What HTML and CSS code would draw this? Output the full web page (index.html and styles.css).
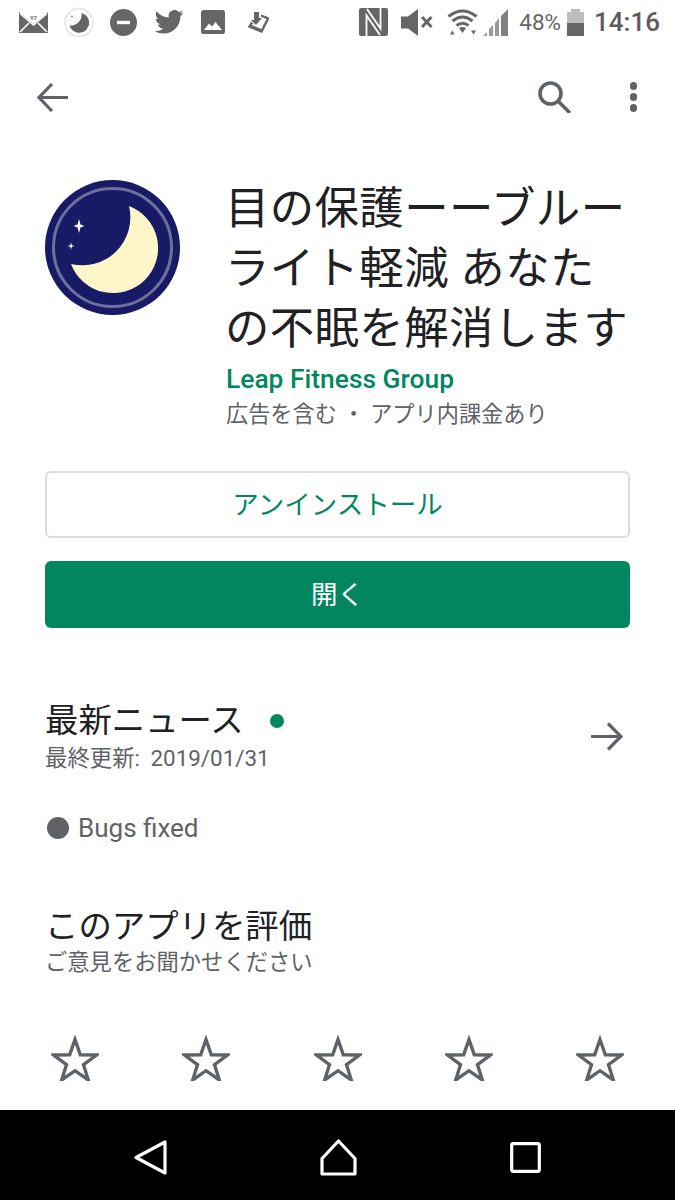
FILE: index.html
```html
<!DOCTYPE html>
<html lang="ja">
    <head>
        <meta charset="utf-8" />
        <meta name="viewport" content="width=device-width, initial-scale=1" />
        <title>目の保護</title>
        <link rel="stylesheet" href="styles.css">
    </head>
    <body>
        <div class="screen">
            <!-- Status bar -->
            <div class="status">
                <div class="status-left">
                    <svg class="ic-mail" width="29" height="21" viewBox="0 0 29 21"><rect width="29" height="21" fill="#666"/><path d="M0 0h29L14.500 12z" fill="#fff"/><path d="M1 1.500L14.500 13 28 1.500M1 20l9-9M28 20l-9-9" fill="none" stroke="#fff" stroke-width="1.600"/><text x="14.500" y="7.500" class="mail-text">Y7</text></svg>
                    <svg class="ic-moon" width="30" height="31" viewBox="0 0 30 31"><circle cx="15" cy="15.500" r="14" fill="#fff" stroke="#e4e4e4" stroke-width="1.500"/><path d="M17.500 6a10 10 0 1 1-12 12.500a11 11 0 0 0 12-12.500z" fill="#666"/><circle cx="8" cy="9.500" r="1" fill="#888"/><circle cx="6" cy="13" r=".6" fill="#aaa"/></svg>
                    <svg class="ic-dnd" width="27" height="27" viewBox="0 0 27 27"><circle cx="13.500" cy="13.500" r="13.500" fill="#666"/><rect x="7" y="11.800" width="13" height="3.400" fill="#fff"/></svg>
                    <svg class="ic-bird" width="30" height="24" viewBox="0 0 24 20"><path d="M24 2.400a9.800 9.800 0 0 1-2.800.8 4.900 4.900 0 0 0 2.200-2.700 9.800 9.800 0 0 1-3.100 1.200 4.900 4.900 0 0 0-8.400 4.500A14 14 0 0 1 1.700 1a4.900 4.900 0 0 0 1.500 6.600 4.900 4.900 0 0 1-2.200-.6c0 2.400 1.700 4.400 3.900 4.900a4.900 4.900 0 0 1-2.200.1 4.900 4.900 0 0 0 4.600 3.400A9.900 9.900 0 0 1 0 17.400 14 14 0 0 0 7.500 19.600c9.100 0 14-7.500 14-14v-.6A10 10 0 0 0 24 2.400z" fill="#666"/></svg>
                    <svg class="ic-pic" width="24" height="24" viewBox="0 0 24 24"><rect width="24" height="24" rx="2.500" fill="#666"/><path d="M3 20l5-6.500 3 3 3.500-4.500 6.500 8z" fill="#fff"/></svg>
                    <svg class="ic-ticket" width="21" height="21" viewBox="0 0 21 21"><path d="M6 0h5v6h3l-6 7-5-5h3z" fill="#666"/><path d="M13 3.500l7 3-6.500 13-12-5 2.500-4" fill="none" stroke="#666" stroke-width="2.400"/><path d="M1 15l12.500 5 1-2.500-12-5z" fill="#666"/></svg>
                </div>
                <div class="status-right">
                    <svg class="ic-nfc" width="29" height="28" viewBox="0 0 29 28"><rect width="29" height="28" rx="2" fill="#666"/><path d="M7.500 28V7.500L21 27M21.500 0v20.500L8 1" fill="none" stroke="#fff" stroke-width="1.800"/></svg>
                    <svg class="ic-mute" width="32" height="27" viewBox="0 0 32 27"><path d="M0 7.500h7L17 0v27L7 19.500H0z" fill="#666"/><path d="M21 8l9.500 10M30.500 8L21 18" stroke="#666" stroke-width="3"/></svg>
                    <svg class="ic-wifi" width="31" height="26" viewBox="0 0 31 26"><path d="M1.500 7.500q14-11 28 0M5.500 12q10-8 20 0M9.500 16.500q6-4.500 12 0" fill="none" stroke="#666" stroke-width="3"/><path d="M12 19q3.500-2 7 0l-3.500 5z" fill="#666"/><path d="M3 25.500l2.300-4 2.300 4zM24 21.500h5l-2.500 4z" fill="#666"/></svg>
                    <svg class="ic-signal" width="26" height="27" viewBox="0 0 26 27"><path d="M0 27l4-4v4zM6 27v-7l4-4v11zM12 27V14l4-5v18z" fill="#9a9a9a"/><path d="M18 27V7l7-7v27z" fill="#808080"/></svg>
                    <span class="battery-text">48%</span>
                    <div class="battery">
                        <div class="battery-cap"></div>
                        <div class="battery-empty"></div>
                        <div class="battery-full"></div>
                    </div>
                    <span class="clock">14:16</span>
                </div>
            </div>

            <!-- Toolbar -->
            <div class="toolbar">
                <svg width="31" height="29" viewBox="0 0 31 29"><path d="M31 14.500H3M15 1L2 14.500 15 28" fill="none" stroke="#5f6368" stroke-width="3.200"/></svg>
                <div class="toolbar-right">
                    <svg width="33" height="32" viewBox="0 0 33 32"><circle cx="12.500" cy="12.500" r="10.500" fill="none" stroke="#5f6368" stroke-width="3.600"/><path d="M20 20L32 32" stroke="#5f6368" stroke-width="3.600"/></svg>
                    <div class="dots"><span></span><span></span><span></span></div>
                </div>
            </div>

            <!-- App header -->
            <div class="app-head">
                <svg class="app-icon" width="135" height="135" viewBox="0 0 135 135">
                    <circle cx="67.500" cy="67.500" r="67.500" fill="#181a66"/>
                    <circle cx="67.500" cy="67.500" r="59" fill="none" stroke="#6d6f9e" stroke-width="3"/>
                    <path d="M84 26A45 45 0 1 1 26 84A48 48 0 0 0 84 26z" fill="#fdf6c9"/>
                    <path d="M34 39l1.500 5.500 4 1.500-4 1.500-1.500 5.500-1.500-5.500-4-1.500 4-1.500z" fill="#fff"/>
                    <path d="M26 62.500l.8 2.700 2.700.8-2.700.8-.8 2.700-.8-2.700-2.700-.8 2.700-.8z" fill="#fff"/>
                </svg>
                <div class="app-info">
                    <h1 class="app-title">目の保護ーーブルーライト軽減 あなたの不眠を解消します</h1>
                    <div class="app-dev">Leap Fitness Group</div>
                    <div class="app-note">広告を含む ・ アプリ内課金あり</div>
                </div>
            </div>

            <!-- Buttons -->
            <div class="actions">
                <div class="btn btn-outline">アンインストール</div>
                <div class="btn btn-solid">開く</div>
            </div>

            <!-- What's new -->
            <div class="news">
                <div>
                    <div class="news-title"><h2 class="section-title">最新ニュース</h2><span class="news-dot"></span></div>
                    <div class="news-date">最終更新: 2019/01/31</div>
                </div>
                <svg width="32" height="29" viewBox="0 0 32 29"><path d="M0 14.500h29M17 1.500L30 14.500 17 27.500" fill="none" stroke="#5f6368" stroke-width="3.200"/></svg>
            </div>
            <div class="bugs"><span class="bug-dot"></span>Bugs fixed</div>

            <!-- Rate -->
            <div class="rate">
                <h2 class="section-title">このアプリを評価</h2>
                <div class="rate-sub">ご意見をお聞かせください</div>
            </div>
            <div class="stars">
                <svg width="48" height="46" viewBox="0 0 48 46"><path class="star" d="M24 4.500l5.300 15.300 16.200.200-13 9.700 4.800 15.300-13.300-9.300-13.300 9.300 4.800-15.300-13-9.700 16.200-.200z"/></svg>
                <svg width="48" height="46" viewBox="0 0 48 46"><path class="star" d="M24 4.500l5.300 15.300 16.200.200-13 9.700 4.800 15.300-13.300-9.300-13.300 9.300 4.800-15.300-13-9.700 16.200-.200z"/></svg>
                <svg width="48" height="46" viewBox="0 0 48 46"><path class="star" d="M24 4.500l5.300 15.300 16.200.200-13 9.700 4.800 15.300-13.300-9.300-13.300 9.300 4.800-15.300-13-9.700 16.200-.200z"/></svg>
                <svg width="48" height="46" viewBox="0 0 48 46"><path class="star" d="M24 4.500l5.300 15.300 16.200.200-13 9.700 4.800 15.300-13.300-9.300-13.300 9.300 4.800-15.300-13-9.700 16.200-.200z"/></svg>
                <svg width="48" height="46" viewBox="0 0 48 46"><path class="star" d="M24 4.500l5.300 15.300 16.200.200-13 9.700 4.800 15.300-13.300-9.300-13.300 9.300 4.800-15.300-13-9.700 16.200-.200z"/></svg>
            </div>

            <!-- Navigation bar -->
            <div class="navbar">
                <svg width="33" height="35" viewBox="0 0 33 35"><path d="M31 2v31L2 17.500z" fill="none" stroke="#fff" stroke-width="3.200" stroke-linejoin="round"/></svg>
                <svg width="37" height="37" viewBox="0 0 37 37"><path d="M18.500 2L35 19.500V35H2V19.500z" fill="none" stroke="#fff" stroke-width="3.200" stroke-linejoin="round"/></svg>
                <svg width="31" height="31" viewBox="0 0 31 31"><rect x="1.700" y="1.700" width="27.600" height="27.600" rx="1.500" fill="none" stroke="#fff" stroke-width="3.200"/></svg>
            </div>
        </div>
    </body>
</html>
```

FILE: styles.css
```css
* {
    box-sizing: border-box;
}

html,
body {
    margin: 0;
    padding: 0;
    background: #fff;
}

body {
    font-family: Roboto, "Noto Sans CJK JP", sans-serif;
    color: #202124;
}

.screen {
    width: 675px;
    height: 1200px;
    display: flex;
    flex-direction: column;
    overflow: hidden;
}

.status {
    height: 48px;
    flex: none;
    display: flex;
    justify-content: space-between;
    align-items: center;
    padding: 0 15px 4px 19px;
}

.status-left,
.status-right {
    display: flex;
    align-items: center;
}

.mail-text {
    font-size: 6px;
    font-weight: 700;
    text-anchor: middle;
    fill: #666;
}

.ic-moon {
    margin-left: 16px;
}

.ic-dnd {
    margin-left: 16px;
}

.ic-bird {
    margin-left: 17px;
}

.ic-pic {
    margin-left: 17px;
}

.ic-ticket {
    margin-left: 23px;
}

.ic-mute {
    margin-left: 13px;
}

.ic-wifi {
    margin-left: 14px;
}

.ic-signal {
    margin-left: 5px;
}

.battery-text {
    margin-left: 10px;
    font-size: 22.500px;
    color: #666;
}

.battery {
    margin-left: 6px;
    width: 17px;
    height: 27px;
    display: flex;
    flex-direction: column;
    align-items: center;
}

.battery-cap {
    width: 9px;
    height: 3px;
    background: #bdbdbd;
}

.battery-empty {
    width: 100%;
    height: 11px;
    background: #bdbdbd;
}

.battery-full {
    width: 100%;
    height: 13px;
    background: #666;
}

.clock {
    margin-left: 10px;
    font-size: 26px;
    font-weight: 500;
    color: #5c5c5c;
}

.toolbar {
    height: 98px;
    flex: none;
    display: flex;
    justify-content: space-between;
    align-items: center;
    padding: 0 38px 0 37px;
}

.toolbar-right {
    display: flex;
    align-items: center;
    gap: 59px;
}

.dots {
    display: flex;
    flex-direction: column;
    gap: 3.500px;
}

.dots span {
    width: 7.500px;
    height: 7.500px;
    border-radius: 50%;
    background: #5f6368;
}

.app-head {
    display: flex;
    padding: 0 45px;
    margin-top: 33px;
}

.app-icon {
    flex: none;
    margin-top: 1px;
}

.app-info {
    margin-left: 45px;
    width: 406px;
}

.app-title {
    margin: 0;
    font-size: 44.400px;
    line-height: 60px;
    font-weight: 400;
    letter-spacing: 0.400px;
    color: #202124;
}

.app-dev {
    margin-top: 3px;
    font-size: 26.400px;
    line-height: 34px;
    font-weight: 500;
    color: #01875f;
    margin-left: 1px;
}

.app-note {
    margin: 2px 0 0 1px;
    font-size: 22.200px;
    line-height: 32px;
    color: #5f6368;
}

.actions {
    padding: 0 45px;
    margin-top: 41px;
}

.btn {
    height: 67px;
    display: flex;
    align-items: center;
    justify-content: center;
    padding-bottom: 5px;
    font-size: 26.500px;
    border-radius: 6px;
}

.btn-outline {
    border: 2px solid #dadce0;
    color: #01875f;
}

.btn-solid {
    margin-top: 23px;
    background: #01875f;
    color: #fff;
}

.news {
    display: flex;
    justify-content: space-between;
    align-items: center;
    padding: 0 52px 0 45px;
    margin-top: 71px;
}

.news-title {
    display: flex;
    align-items: center;
}

.section-title {
    margin: 0;
    font-size: 33.400px;
    line-height: 44px;
    font-weight: 400;
    color: #202124;
}

.news-date {
    font-size: 22.400px;
    word-spacing: 5px;
    line-height: 30px;
    color: #5f6368;
}

.rate-sub {
    margin-top: -2px;
    font-size: 22.300px;
    line-height: 30px;
    color: #5f6368;
}

.news-dot {
    width: 14px;
    height: 14px;
    border-radius: 50%;
    background: #01875f;
    margin-left: 26px;
}

.bugs {
    display: flex;
    align-items: center;
    padding: 0 45px;
    margin-top: 39px;
    font-size: 26px;
    line-height: 32px;
    color: #5f6368;
}

.bug-dot {
    width: 22px;
    height: 22px;
    border-radius: 50%;
    background: #5f6368;
    margin: 0 9px 0 2px;
}

.rate {
    padding: 0 45px;
    margin-top: 61px;
}

.stars {
    display: flex;
    justify-content: space-between;
    padding: 0 51px;
    margin-top: 58px;
}

.star {
    fill: none;
    stroke: #5f6368;
    stroke-width: 3.400;
}

.navbar {
    margin-top: auto;
    height: 90px;
    flex: none;
    background: #000;
    display: flex;
    justify-content: space-between;
    align-items: center;
    padding: 4px 134px 0 134px;
}
```
